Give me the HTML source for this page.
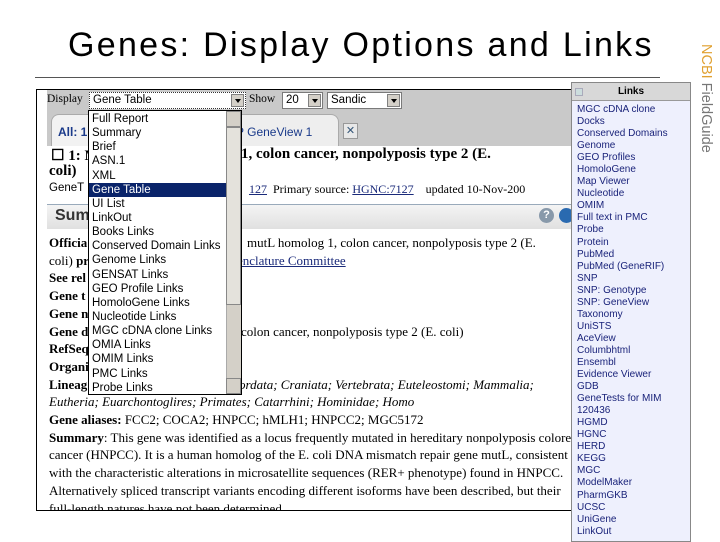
<!DOCTYPE html>
<html><head><meta charset="utf-8"><style>
*{margin:0;padding:0;box-sizing:border-box}
body{width:720px;height:540px;background:#fff;position:relative;overflow:hidden;font-family:"Liberation Sans",sans-serif}
.a{position:absolute;white-space:nowrap}
.s{font-family:"Liberation Serif",serif;font-size:13px;color:#000}
.lk{color:#1a2a7a;text-decoration:underline}
.dd div{height:14.15px;line-height:14px;font-size:11.5px;padding-left:3px}
.ln div{height:12.06px;line-height:12px;font-size:10px;color:#1a237a;padding-left:5px}
.sel{background:#fff;border:1px solid #7a7a7a;font-size:11.5px;line-height:14px;padding-left:3px}
.arr{position:absolute;right:1px;top:1px;width:13px;height:13px;background:#d4d0c8;border:1px solid #808080}
.arr:after{content:"";position:absolute;left:3px;top:4px;border:3px solid transparent;border-top:4px solid #000}
</style></head><body>
<div class="a" style="left:68px;top:26px;font-size:34px;letter-spacing:2.3px;color:#000">Genes: Display Options and Links</div>
<div class="a" style="left:35px;top:77px;width:625px;height:1px;background:#555"></div>
<div class="a" style="left:692px;top:44px;transform-origin:0 0;transform:translate(22px,0) rotate(90deg);font-size:14.5px;color:#777"><span style="color:#e0a030">NCBI</span> FieldGuide</div>

<div class="a" style="left:36px;top:89px;width:536px;height:422px;border:1px solid #000;background:#fff;overflow:hidden">
 <div class="a" style="left:10px;top:0;width:530px;height:56px;background:#c9c9c9"></div>
 <div class="a" style="left:10px;top:3px;font-family:'Liberation Serif',serif;font-size:11.5px">Display</div>
 <div class="a sel" style="left:52px;top:2px;width:157px;height:17px;border-style:dotted;border-color:#333">Gene Table<div class="arr"></div></div>
 <div class="a" style="left:212px;top:3px;font-family:'Liberation Serif',serif;font-size:11.5px">Show</div>
 <div class="a sel" style="left:245px;top:2px;width:41px;height:17px">20<div class="arr"></div></div>
 <div class="a sel" style="left:290px;top:2px;width:75px;height:17px">Sandic<div class="arr"></div></div>
 <div class="a" style="left:14px;top:24px;width:45px;height:32px;background:#f2f2f2;border:1px solid #aaa;border-bottom:none;border-radius:8px 8px 0 0;font-size:12px;font-weight:bold;color:#1a3a8a;padding:10px 0 0 6px">All: 1</div>
 <div class="a" style="left:190px;top:24px;width:112px;height:32px;background:#eee;border:1px solid #aaa;border-bottom:none;border-radius:0 8px 0 0;font-size:12px;color:#1a3a8a;padding:10px 0 0 8px">P GeneView 1</div>
 <div class="a" style="left:306px;top:33px;width:15px;height:16px;background:#e8e8e8;border:1px solid #999;font-size:11px;color:#357;text-align:center;line-height:14px">✕</div>
 <div class="a s" style="left:14px;top:56px;font-size:15px;font-weight:bold">☐ 1: M</div>
 <div class="a s" style="left:204px;top:56px;font-size:15px;font-weight:bold">1, colon cancer, nonpolyposis type 2 (E.</div>
 <div class="a s" style="left:12px;top:73px;font-size:15px;font-weight:bold">coli)</div>
 <div class="a" style="left:12px;top:92px;font-size:11.5px">GeneT</div>
 <div class="a" style="left:212px;top:92px;font-size:12px;font-family:'Liberation Serif',serif"><span class="lk">127</span>&nbsp; Primary source: <span class="lk">HGNC:7127</span>&nbsp;&nbsp;&nbsp;&nbsp;updated 10-Nov-200</div>
 <div class="a" style="left:10px;top:114px;width:530px;height:25px;background:linear-gradient(#f4f4f4,#e0e0e0);border-top:1px solid #9ab"></div>
 <div class="a" style="left:18px;top:117px;font-size:16px;font-weight:bold;color:#333">Sum</div>
 <div class="a" style="left:502px;top:118px;width:15px;height:15px;border-radius:50%;background:#8899aa;color:#fff;font-size:11px;font-weight:bold;text-align:center;line-height:15px">?</div>
 <div class="a" style="left:522px;top:118px;width:15px;height:15px;border-radius:50%;background:#2a6ab0"></div>
 <div class="a s" style="left:12px;top:144px;line-height:17.7px">
 <b>Officia</b><br>
 coli) <b>pr</b><br>
 <b>See rel</b><br><b>Gene t</b><br><b>Gene n</b><br>
 <b>Gene d</b><br>
 <b>RefSeq</b><br><b>Organi</b><br>
 <b>Lineag</b><br>
 <i>Eutheria; Euarchontoglires; Primates; Catarrhini; Hominidae; Homo</i><br>
 <b>Gene aliases:</b> FCC2; COCA2; HNPCC; hMLH1; HNPCC2; MGC5172<br>
 <b>Summary</b>: This gene was identified as a locus frequently mutated in hereditary nonpolyposis colorectal<br>
 cancer (HNPCC). It is a human homolog of the E. coli DNA mismatch repair gene mutL, consistent<br>
 with the characteristic alterations in microsatellite sequences (RER+ phenotype) found in HNPCC.<br>
 Alternatively spliced transcript variants encoding different isoforms have been described, but their<br>
 full-length natures have not been determined.
 </div>
 <div class="a s" style="left:210px;top:144px;line-height:17.7px">mutL homolog 1, colon cancer, nonpolyposis type 2 (E.</div>
 <div class="a s lk" style="left:200px;top:161.7px;line-height:17.7px">enclature Committee</div>
 <div class="a s" style="left:204px;top:232.5px;line-height:17.7px">colon cancer, nonpolyposis type 2 (E. coli)</div>
 <div class="a s" style="left:202px;top:285.6px;line-height:17.7px"><i>ordata; Craniata; Vertebrata; Euteleostomi; Mammalia;</i></div>
 <div class="a dd" style="left:51px;top:20px;width:154px;height:285px;background:#fff;border:1px solid #000;padding-top:1px">
  <div>Full Report</div><div>Summary</div><div>Brief</div><div>ASN.1</div><div>XML</div>
  <div style="background:#0a246a;color:#fff">Gene Table</div><div>UI List</div><div>LinkOut</div><div>Books Links</div>
  <div>Conserved Domain Links</div><div>Genome Links</div><div>GENSAT Links</div><div>GEO Profile Links</div>
  <div>HomoloGene Links</div><div>Nucleotide Links</div><div>MGC cDNA clone Links</div><div>OMIA Links</div>
  <div>OMIM Links</div><div>PMC Links</div><div>Probe Links</div>
  <div class="a" style="right:0;top:0;width:15px;height:283px;background:#d4d0c8;border-left:1px solid #aaa;padding:0"></div>
  <div class="a" style="right:0;top:0;width:15px;height:16px;background:#d4d0c8;border:1px solid #888;padding:0"></div>
  <div class="a" style="right:0;top:16px;width:15px;height:178px;background:#e4e2dc;border:1px solid #888;padding:0"></div>
  <div class="a" style="right:0;top:267px;width:15px;height:16px;background:#d4d0c8;border:1px solid #888;padding:0"></div>
 </div>
</div>

<div class="a" style="left:571px;top:82px;width:120px;height:460px;background:#eef0fd;border:1px solid #888">
 <div style="height:18px;background:#d8d8d8;border-bottom:1px solid #999;font-size:10px;font-weight:bold;text-align:center;line-height:18px;position:relative">Links<span style="position:absolute;left:3px;top:5px;width:8px;height:8px;background:#cdd;border:1px solid #aab"></span></div>
 <div class="ln" style="padding-top:3px">
 <div>MGC cDNA clone</div><div>Docks</div><div>Conserved Domains</div><div>Genome</div><div>GEO Profiles</div><div>HomoloGene</div><div>Map Viewer</div><div>Nucleotide</div><div>OMIM</div><div>Full text in PMC</div><div>Probe</div><div>Protein</div><div>PubMed</div><div>PubMed (GeneRIF)</div><div>SNP</div><div>SNP: Genotype</div><div>SNP: GeneView</div><div>Taxonomy</div><div>UniSTS</div><div>AceView</div><div>Columbhtml</div><div>Ensembl</div><div>Evidence Viewer</div><div>GDB</div><div>GeneTests for MIM</div><div>120436</div><div>HGMD</div><div>HGNC</div><div>HERD</div><div>KEGG</div><div>MGC</div><div>ModelMaker</div><div>PharmGKB</div><div>UCSC</div><div>UniGene</div><div>LinkOut</div>
 </div>
</div>
</body></html>
